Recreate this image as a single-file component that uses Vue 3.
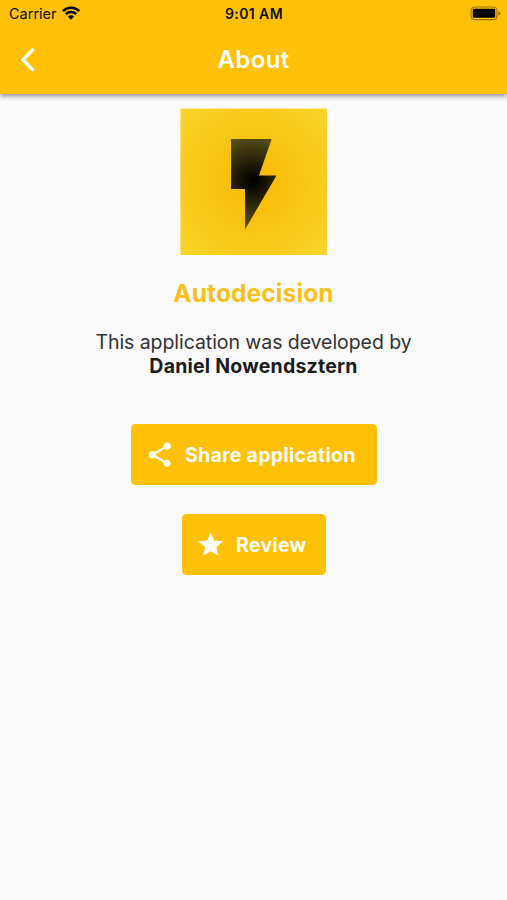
<script setup>
const actions = [
  {
    id: 'share',
    label: 'Share application',
    path: 'M18 16.08c-.76 0-1.44.3-1.96.77L8.91 12.7c.05-.23.09-.46.09-.7s-.04-.47-.09-.7l7.05-4.11c.54.5 1.25.81 2.04.81 1.66 0 3-1.34 3-3s-1.34-3-3-3-3 1.34-3 3c0 .24.04.47.09.7L8.04 9.81C7.5 9.31 6.79 9 6 9c-1.66 0-3 1.34-3 3s1.34 3 3 3c.79 0 1.5-.31 2.04-.81l7.12 4.16c-.05.21-.08.43-.08.65 0 1.61 1.31 2.92 2.92 2.92s2.92-1.31 2.92-2.92-1.31-2.92-2.92-2.92z',
  },
  {
    id: 'review',
    label: 'Review',
    path: 'M12 17.27L18.18 21l-1.64-7.03L22 9.24l-7.19-.61L12 2 9.19 8.63 2 9.24l5.46 4.73L5.82 21z',
  },
]
</script>

<template>
  <div class="screen">
    <header class="top">
      <div class="status">
        <div class="carrier">
          <span>Carrier</span>
          <svg class="wifi" width="18" height="14" viewBox="0 0 18 14">
            <g fill="none" stroke="#000" stroke-width="2.5">
              <path d="M.9 5.1a11.5 11.5 0 0 1 16.2 0" />
              <path d="M3.8 8.2a7.4 7.4 0 0 1 10.4 0" />
            </g>
            <path d="M9 13.8 5.9 10.6a4.4 4.4 0 0 1 6.2 0z" />
          </svg>
        </div>
        <span class="time">9:01 AM</span>
        <svg class="battery" width="31" height="15" viewBox="0 0 31 15">
          <rect x="1" y="1" width="26" height="12.6" rx="3.6" fill="none" stroke="#000" stroke-opacity=".4" stroke-width="1.2" />
          <rect x="2.8" y="2.8" width="22.4" height="9" rx="1.2" />
          <path d="M28.5 5.2q2 .8 2 2.1t-2 2.1z" fill-opacity=".45" />
        </svg>
      </div>
      <div class="bar">
        <svg class="back" width="16" height="26" viewBox="0 0 16 26">
          <path d="M13.5 2 2.9 12.8 13.5 23.6" fill="none" stroke="#fff" stroke-width="3.4" />
        </svg>
        <h1>About</h1>
        <span></span>
      </div>
    </header>

    <main>
      <svg class="logo" width="147" height="147" viewBox="0 0 147 147">
        <defs>
          <radialGradient id="glow" cx="50%" cy="50%" r="70%">
            <stop offset="0" stop-color="#fabb05" />
            <stop offset=".35" stop-color="#f9c110" />
            <stop offset="1" stop-color="#f7d52b" />
          </radialGradient>
          <radialGradient id="bolt" gradientUnits="userSpaceOnUse" cx="73" cy="73" r="48">
            <stop offset="0" stop-color="#000" />
            <stop offset=".12" stop-color="#080600" />
            <stop offset="1" stop-color="#5f5518" />
          </radialGradient>
        </defs>
        <rect x=".4" y=".6" width="146.6" height="146.4" fill="url(#glow)" />
        <path d="M51 31H91.7L79 67.5H96.5L65 121.5V81H51z" fill="url(#bolt)" />
      </svg>
      <h2>Autodecision</h2>
      <p class="credit">This application was developed by</p>
      <p class="author">Daniel Nowendsztern</p>
      <div class="actions">
        <button v-for="a in actions" :key="a.id" :class="a.id">
          <svg width="29.5" height="29.5" viewBox="0 0 24 24" fill="#fff"><path :d="a.path" /></svg>
          <span>{{ a.label }}</span>
        </button>
      </div>
    </main>
  </div>
</template>

<style>
body {
  background: #fafafa;
}
</style>

<style scoped>
.screen {
  height: 900px;
  overflow: hidden;
  background: #fafafa;
  font-family: Inter, "Liberation Sans", sans-serif;
}
h1, h2, p {
  margin: 0;
  white-space: nowrap;
}
.top {
  height: 94px;
  background: #ffc107;
  box-shadow: 0 2px 5px rgba(0, 0, 0, .45);
}
.status {
  display: grid;
  grid-template-columns: 1fr auto 1fr;
  align-items: center;
  height: 27px;
  padding: 0 6px 0 9px;
  color: #111;
  font-size: 14.5px;
}
.carrier {
  display: flex;
  align-items: center;
  gap: 5px;
}
.wifi {
  margin-top: -2px;
}
.time {
  margin-left: -2px;
  font-size: 14px;
  font-weight: 600;
  letter-spacing: .4px;
}
.battery {
  justify-self: end;
}
.bar {
  display: grid;
  grid-template-columns: 1fr auto 1fr;
  align-items: center;
  height: 65px;
  padding: 0 20px;
}
h1 {
  color: #fff;
  font-size: 24px;
  font-weight: 600;
  line-height: 30px;
  letter-spacing: .4px;
}
main {
  display: flex;
  flex-direction: column;
  align-items: center;
  padding-top: 14px;
}
.logo {
  display: block;
}
h2 {
  margin-top: 22px;
  color: #fbc01b;
  font-size: 24.5px;
  font-weight: 700;
  line-height: 32px;
  letter-spacing: .12px;
}
.credit, .author {
  color: #333;
  font-size: 19.5px;
  line-height: 23px;
}
.credit {
  margin-top: 22px;
  letter-spacing: -.06px;
}
.author {
  margin-top: .5px;
  color: #1c1c1c;
  font-weight: 700;
  letter-spacing: .22px;
}
.actions {
  display: flex;
  flex-direction: column;
  align-items: center;
  gap: 29px;
  margin-top: 46.5px;
}
button {
  display: flex;
  align-items: center;
  gap: 10.5px;
  box-sizing: border-box;
  height: 61px;
  padding: 0 0 0 14.5px;
  border: 0;
  border-radius: 4.5px;
  background: #ffc107;
  color: #fff;
  font-family: inherit;
  font-size: 19.5px;
  font-weight: 700;
  letter-spacing: .28px;
  white-space: nowrap;
}
.share {
  width: 246px;
}
.review {
  width: 144px;
}
</style>
